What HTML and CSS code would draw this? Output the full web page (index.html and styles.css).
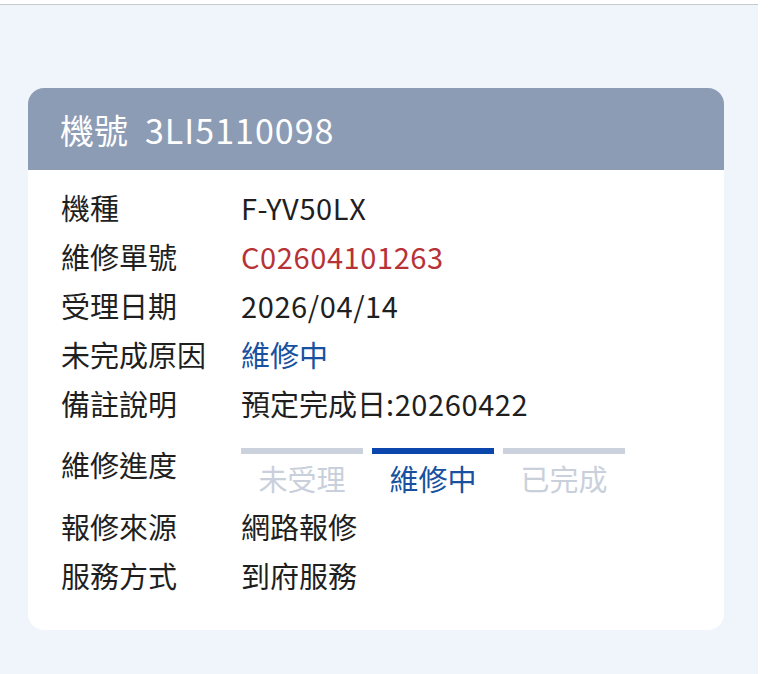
FILE: index.html
```html
<!DOCTYPE html>
<html lang="zh-Hant">
<head>
<meta charset="utf-8">
<link rel="stylesheet" href="styles.css">
</head>
<body>
<div class="page">
  <section class="card">
    <header class="card-head">
      <span class="head-label">機號</span>
      <span class="head-value">3LI5110098</span>
    </header>
    <div class="card-body">
      <div class="row"><span class="label">機種</span><span class="value num">F-YV50LX</span></div>
      <div class="row"><span class="label">維修單號</span><span class="value num red">C02604101263</span></div>
      <div class="row"><span class="label">受理日期</span><span class="value num">2026/04/14</span></div>
      <div class="row"><span class="label">未完成原因</span><span class="value blue">維修中</span></div>
      <div class="row"><span class="label">備註說明</span><span class="value">預定完成日<span class="num">:20260422</span></span></div>
      <div class="row row-progress">
        <span class="label">維修進度</span>
        <div class="steps">
          <div class="step"><span class="bar"></span><span class="step-text">未受理</span></div>
          <div class="step active"><span class="bar"></span><span class="step-text">維修中</span></div>
          <div class="step"><span class="bar"></span><span class="step-text">已完成</span></div>
        </div>
      </div>
      <div class="row"><span class="label">報修來源</span><span class="value">網路報修</span></div>
      <div class="row"><span class="label">服務方式</span><span class="value">到府服務</span></div>
    </div>
  </section>
</div>
</body>
</html>
```

FILE: styles.css
```css
html, body {
  margin: 0;
  padding: 0;
  background: #ffffff;
}

body {
  font-family: "Noto Sans CJK TC", "Noto Sans", sans-serif;
  color: #1f1f1f;
  padding-top: 4px;
}

.page {
  width: 758px;
  height: 670px;
  background: #f0f5fc;
  border-top: 1px solid #c6cbd3;
  box-sizing: border-box;
  padding: 83px 0 0 28px;
}

.card {
  width: 696px;
  background: #ffffff;
  border-radius: 16px;
  overflow: hidden;
}

.card-head {
  height: 82px;
  background: #8d9cb5;
  color: #ffffff;
  display: flex;
  align-items: center;
  padding-left: 32px;
  font-size: 34px;
  gap: 17px;
}

.head-value {
  letter-spacing: 1px;
}

.card-body {
  padding: 12px 0 31px 33px;
}

.row {
  display: flex;
  align-items: center;
  height: 49px;
  font-size: 29px;
}

.label {
  width: 180px;
  flex: none;
}

/* Latin digits and letters run a touch wider than the CJK face */
.num {
  letter-spacing: 0.6px;
}

.red { color: #b73237; }
.blue { color: #17519f; }

.row-progress {
  height: 74px;
}

.steps {
  display: flex;
  gap: 9px;
  margin-top: 16px;
}

.step {
  width: 122px;
  display: flex;
  flex-direction: column;
  align-items: center;
  gap: 6px;
}

.bar {
  display: block;
  width: 100%;
  height: 6px;
  background: #cbd2de;
}

.step-text {
  color: #c9d0db;
  line-height: 36px;
}

.step.active .bar { background: #0b46ad; }
.step.active .step-text { color: #17519f; }
```
